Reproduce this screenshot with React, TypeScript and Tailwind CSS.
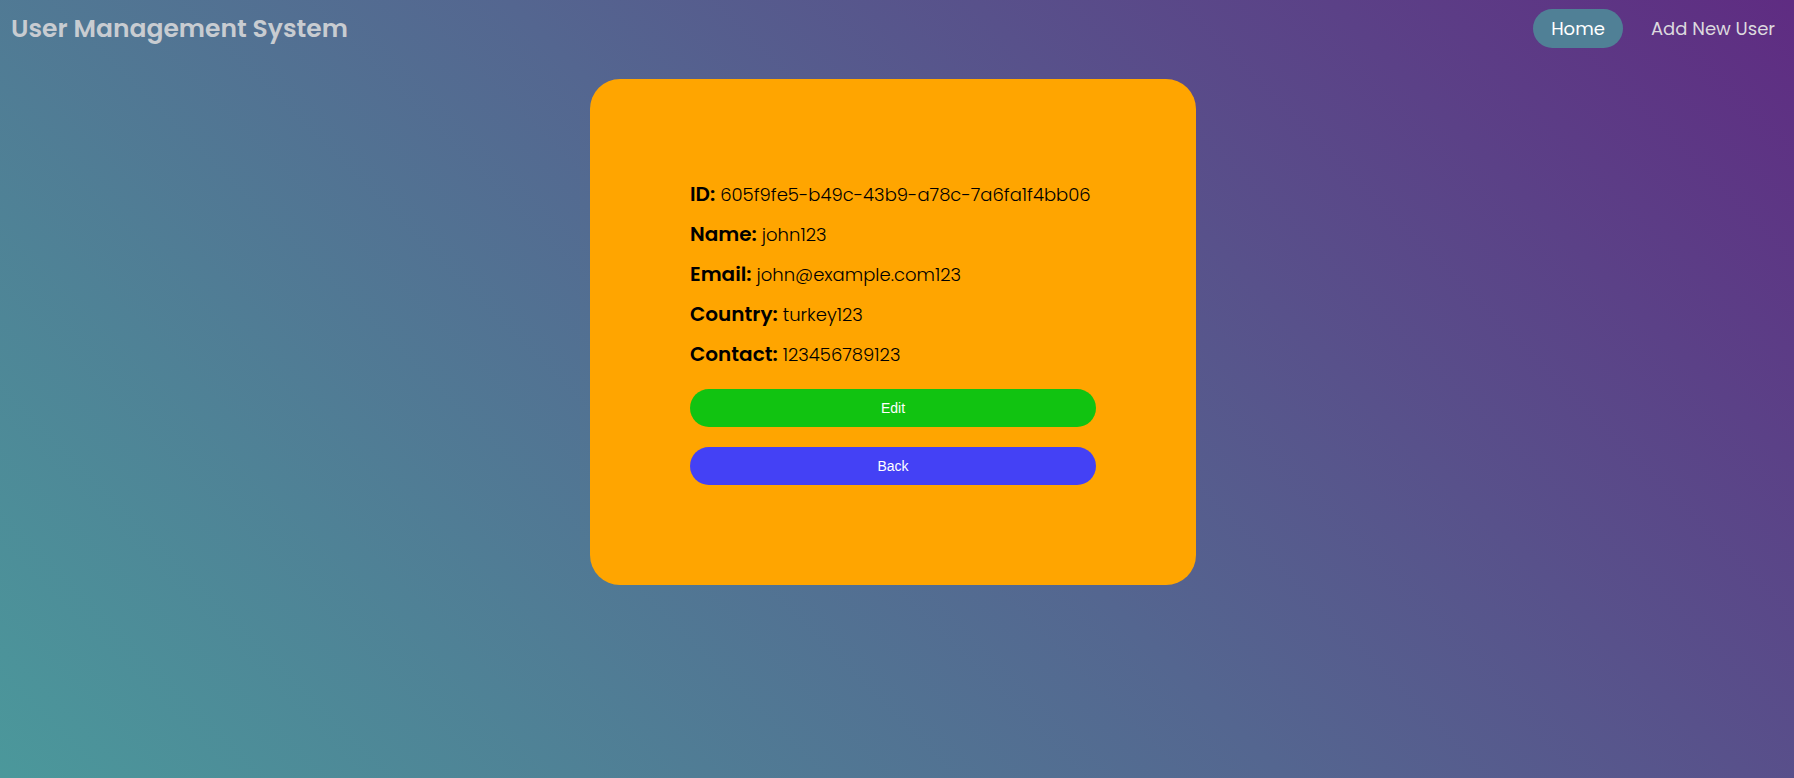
const details = [
  { label: "ID:", value: "605f9fe5-b49c-43b9-a78c-7a6fa1f4bb06" },
  { label: "Name:", value: "john123" },
  { label: "Email:", value: "john@example.com123" },
  { label: "Country:", value: "turkey123" },
  { label: "Contact:", value: "123456789123" },
];

function Header() {
  return (
    <header className="flex items-start justify-between pt-[9px] pr-2.5 pl-[11px]">
      <h1 className="text-[25px] leading-10 font-semibold text-[#c8ccd1]">User Management System</h1>
      <nav className="flex items-center gap-[19px] text-lg">
        <a href="#home" className="flex h-[39px] w-[90px] items-center justify-center rounded-full bg-[#508096] text-white">
          Home
        </a>
        <a href="#add" className="flex h-[39px] w-[142px] items-center justify-center rounded-full whitespace-nowrap text-[#dcd9de]">
          Add New User
        </a>
      </nav>
    </header>
  );
}

function UserCard() {
  return (
    <section className="rounded-[30px] bg-[#ffa500] px-[100px] pt-[95px] pb-[100px] text-black">
      <dl className="w-[406px]">
        {details.map(({ label, value }) => (
          <div key={label} className="flex h-10 items-baseline gap-[5px] whitespace-nowrap">
            <dt className="text-xl leading-10 font-semibold">{label}</dt>
            <dd className="text-lg leading-7 font-light">{value}</dd>
          </div>
        ))}
      </dl>
      <div className="mt-[15px] flex flex-col gap-5 font-['Liberation_Sans',sans-serif] text-sm text-white">
        <button type="button" className="h-[38px] rounded-full bg-[#11c311]">
          Edit
        </button>
        <button type="button" className="h-[38px] rounded-full bg-[#4441f5]">
          Back
        </button>
      </div>
    </section>
  );
}

export default function App() {
  return (
    <div className="min-h-screen bg-[linear-gradient(45deg,#4b989b,#546690_50%,#5f2c82)] font-[Poppins,Inter,sans-serif]">
      <Header />
      <main className="flex justify-center pt-[30px] pr-2">
        <UserCard />
      </main>
    </div>
  );
}
